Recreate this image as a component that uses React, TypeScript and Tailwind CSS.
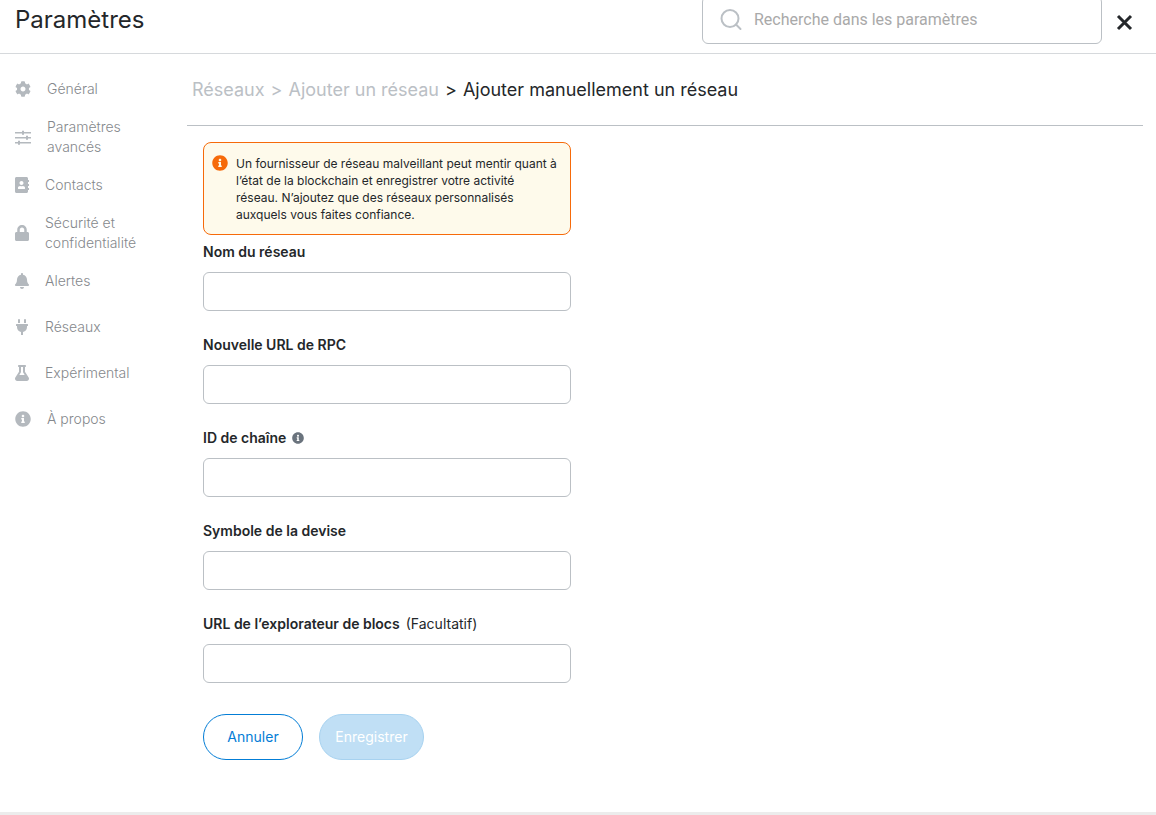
import type { ReactNode } from 'react';
import {
  FaAddressBook,
  FaBell,
  FaCog,
  FaFlask,
  FaInfoCircle,
  FaLock,
  FaPlug,
} from 'react-icons/fa';

function SlidersIcon() {
  return (
    <svg width="16" height="16" viewBox="0 0 16 16" fill="currentColor" aria-hidden="true">
      <path d="M0 3h16v1.5H0zM0 8h16v1.5H0zM0 13h16v1.5H0z" />
      <path d="M7 1.75h2v4H7zM11 6.75h2v4h-2zM3 11.75h2v4H3z" />
    </svg>
  );
}

type NavEntry = { label: string; icon: ReactNode };

const navEntries: NavEntry[] = [
  { label: 'Général', icon: <FaCog className="h-4 w-4" /> },
  { label: 'Paramètres avancés', icon: <SlidersIcon /> },
  { label: 'Contacts', icon: <FaAddressBook className="h-4 w-3.5" /> },
  { label: 'Sécurité et confidentialité', icon: <FaLock className="h-4 w-3.5" /> },
  { label: 'Alertes', icon: <FaBell className="h-4 w-3.5" /> },
  { label: 'Réseaux', icon: <FaPlug className="h-4 w-3.5" /> },
  { label: 'Expérimental', icon: <FaFlask className="h-4 w-3.5" /> },
  { label: 'À propos', icon: <FaInfoCircle className="h-4 w-4" /> },
];

type FieldProps = { id: string; label: string; extra?: ReactNode };

function Field({ id, label, extra }: FieldProps) {
  return (
    <div className="flex flex-col gap-2.5">
      <div className="flex items-center gap-1.5 text-sm leading-5">
        <label htmlFor={id} className="font-semibold">
          {label}
        </label>
        {extra}
      </div>
      <input
        id={id}
        type="text"
        className="h-[39px] w-full rounded-md border border-[#bbc0c5] bg-white px-3 text-sm outline-none"
      />
    </div>
  );
}

export default function App() {
  return (
    <div className="flex min-h-screen flex-col border-b-[3px] border-[#ececec] bg-white font-['Inter',sans-serif] text-[#24272a]">
      <header className="flex h-[54px] items-start overflow-hidden border-b border-[#d6d9dc] pr-[23px] pl-[15px]">
        <h1 className="flex-1 pt-1 text-2xl leading-8">Paramètres</h1>
        <div className="-mt-1 flex h-12 w-[400px] items-center gap-3 rounded-md border border-[#bbc0c5] px-[17px]">
          <svg
            width="22"
            height="22"
            viewBox="0 0 22 22"
            fill="none"
            stroke="#bbc0c5"
            strokeWidth="2"
            strokeLinecap="round"
            className="shrink-0"
            aria-hidden="true"
          >
            <circle cx="10" cy="9.5" r="8.5" />
            <path d="M16 15.5l4.5 4.5" />
          </svg>
          <input
            type="search"
            aria-label="Recherche dans les paramètres"
            placeholder="Recherche dans les paramètres"
            className="w-full bg-transparent font-['Roboto',sans-serif] text-base outline-none placeholder:text-[#a9a9a9]"
          />
        </div>
        <button type="button" aria-label="Fermer" className="mt-[14px] ml-[14px]">
          <svg width="17" height="17" viewBox="0 0 17 17" fill="none" stroke="currentColor" strokeWidth="3">
            <path d="M2 2l13 13M15 2L2 15" />
          </svg>
        </button>
      </header>

      <div className="flex">
        <nav className="w-[187px] shrink-0 pt-3">
          {navEntries.map((entry) => (
            <a
              key={entry.label}
              href="#"
              className="flex min-h-[46px] items-center gap-4 py-[5px] pr-8 pl-[15px] text-sm leading-5 font-light text-[#85888c]"
            >
              <span className="shrink-0 text-[#b4b9be]">{entry.icon}</span>
              <span>{entry.label}</span>
            </a>
          ))}
        </nav>

        <main className="min-w-0 flex-1 pr-[13px]">
          <div className="flex h-[72px] items-center gap-1.5 border-b border-[#bbc0c5] pl-[5px] text-lg leading-6 text-[#bbc0c5]">
            <a href="#">Réseaux</a>
            <span>&gt;</span>
            <a href="#">Ajouter un réseau</a>
            <span className="text-[#24272a]">&gt;</span>
            <h2 className="text-[#24272a]">Ajouter manuellement un réseau</h2>
          </div>

          <form className="ml-4 max-w-[368px] pt-4">
            <div className="flex gap-2 rounded-lg border border-[#f66a0a] bg-[#fefaeb] pt-3 pr-3 pb-[11px] pl-2">
              <FaInfoCircle className="h-4 w-4 shrink-0 text-[#f66a0a]" />
              <p className="text-xs leading-[17px]">
                Un fournisseur de réseau malveillant peut mentir quant à l’état de la blockchain et
                enregistrer votre activité réseau. N’ajoutez que des réseaux personnalisés auxquels
                vous faites confiance.
              </p>
            </div>

            <div className="mt-[7px] flex flex-col gap-6">
              <Field id="network-name" label="Nom du réseau" />
              <Field id="rpc-url" label="Nouvelle URL de RPC" />
              <Field
                id="chain-id"
                label="ID de chaîne"
                extra={<FaInfoCircle className="h-3 w-3 text-[#6a737d]" />}
              />
              <Field id="currency-symbol" label="Symbole de la devise" />
              <Field id="explorer-url" label="URL de l’explorateur de blocs" extra={<span>(Facultatif)</span>} />
            </div>

            <div className="mt-[31px] flex gap-4 text-sm leading-5">
              <button type="button" className="h-[46px] w-[100px] rounded-full border border-[#037dd6] text-[#037dd6]">
                Annuler
              </button>
              <button
                type="submit"
                disabled
                className="h-[46px] w-[105px] rounded-full border border-[#a7d2f0] bg-[#c0dff5] text-white"
              >
                Enregistrer
              </button>
            </div>
          </form>
        </main>
      </div>
    </div>
  );
}
